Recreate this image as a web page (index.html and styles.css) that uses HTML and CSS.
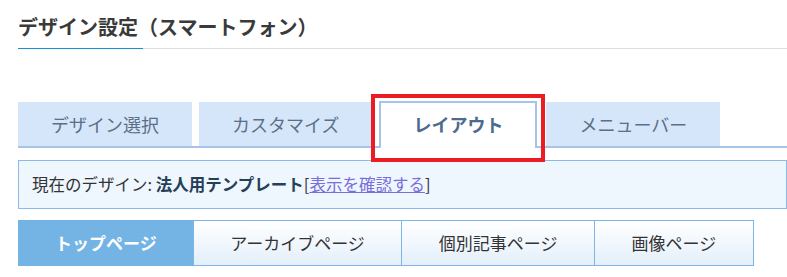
FILE: index.html
```html
<!DOCTYPE html>
<html lang="ja">
<head>
<meta charset="utf-8">
<title>デザイン設定（スマートフォン）</title>
<link rel="stylesheet" href="styles.css">
</head>
<body>
<div class="page">
  <h2 class="title">デザイン設定（スマートフォン）</h2>

  <ul class="tabs">
    <li class="tab">デザイン選択</li>
    <li class="tab">カスタマイズ</li>
    <li class="tab tab-active">レイアウト<span class="highlight"></span></li>
    <li class="tab">メニューバー</li>
  </ul>

  <div class="info">現在のデザイン: <strong class="design-name">法人用テンプレート</strong>[<a class="info-link" href="#">表示を確認する</a>]</div>

  <ul class="subtabs">
    <li class="subtab subtab-active">トップページ</li>
    <li class="subtab">アーカイブページ</li>
    <li class="subtab">個別記事ページ</li>
    <li class="subtab">画像ページ</li>
  </ul>
</div>
</body>
</html>
```

FILE: styles.css
```css
html, body {
  margin: 0;
  padding: 0;
  background: #ffffff;
}

body {
  font-family: "Noto Sans CJK JP", "Noto Sans", sans-serif;
  color: #333333;
  overflow: hidden;
}

.page {
  margin: 0 0 0 18px;
  padding-top: 12px;
}

.title {
  position: relative;
  margin: 0;
  font-size: 20px;
  font-weight: bold;
  line-height: 30px;
  color: #3a3a3a;
  padding-bottom: 6px;
  border-bottom: 1px solid #dddddd;
}

.title::after {
  content: "";
  position: absolute;
  left: 0;
  bottom: -1px;
  width: 125px;
  height: 1px;
  background: #1a8fd6;
}

.tabs {
  list-style: none;
  margin: 53px 0 12px 0;
  padding: 0;
  display: flex;
  gap: 7px;
  border-bottom: 2px solid #a7c4e6;
}

.tab {
  padding: 0 33px;
  height: 44px;
  line-height: 44px;
  font-size: 18px;
  color: #5b6f87;
  background: #d5e6fb;
}

.tab-active {
  position: relative;
  background: #ffffff;
  border: 2px solid #a7c4e6;
  border-bottom: none;
  padding: 0 32px;
  height: 45px;
  line-height: 42px;
  margin-top: -1px;
  margin-bottom: -2px;
  margin-right: 2px;
  font-weight: bold;
  color: #4d6b8e;
}

.highlight {
  position: absolute;
  left: -10px;
  right: -10px;
  top: -9px;
  bottom: -14px;
  border: 4px solid #ec1c24;
}

.info {
  border: 1px solid #8cb9e8;
  background: #eef6fe;
  padding: 11px 13px;
  font-size: 16.5px;
  line-height: 25px;
  color: #333333;
}

.design-name {
  font-weight: bold;
  color: #263f57;
}

.info-link {
  color: #7a6ddc;
  text-decoration: underline;
}

.subtabs {
  list-style: none;
  margin: 11px 0 0 0;
  padding: 0;
  display: flex;
}

.subtab {
  position: relative;
  padding: 0 36.5px;
  height: 44px;
  line-height: 44px;
  font-size: 17px;
  color: #333333;
  border: 1px solid #7db6e6;
  background: linear-gradient(to bottom, #ffffff 0%, #e3effb 100%);
}

.subtab + .subtab {
  margin-left: -1px;
}

.subtab-active {
  padding: 0 36px;
  background: #74b4e4;
  border-color: #74b4e4;
  color: #ffffff;
  font-weight: bold;
}

.subtab-active::after {
  content: "";
  position: absolute;
  left: 18px;
  top: 100%;
  margin-top: 1px;
  width: 0;
  height: 0;
  border-top: 7px solid #74b4e4;
  border-right: 7px solid transparent;
}
```
